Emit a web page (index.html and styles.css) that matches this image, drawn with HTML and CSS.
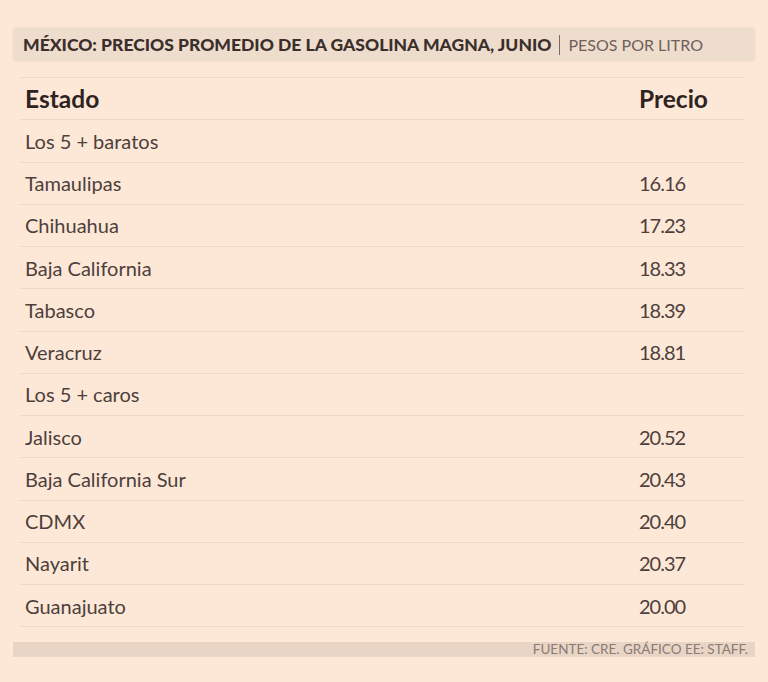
FILE: index.html
```html
<!DOCTYPE html>
<html lang="es">
<head>
<meta charset="utf-8">
<link rel="stylesheet" href="styles.css">
</head>
<body>
<div class="page">
  <div class="titlebar">
    <span class="title">MÉXICO: PRECIOS PROMEDIO DE LA GASOLINA MAGNA, JUNIO</span><span class="sep"></span><span class="unit">PESOS POR LITRO</span>
  </div>
  <div class="table">
    <div class="row head"><span class="c1">Estado</span><span class="c2">Precio</span></div>
    <div class="row"><span class="c1">Los 5 + baratos</span><span class="c2"></span></div>
    <div class="row"><span class="c1">Tamaulipas</span><span class="c2 num">16.16</span></div>
    <div class="row"><span class="c1">Chihuahua</span><span class="c2 num">17.23</span></div>
    <div class="row"><span class="c1">Baja California</span><span class="c2 num">18.33</span></div>
    <div class="row"><span class="c1">Tabasco</span><span class="c2 num">18.39</span></div>
    <div class="row"><span class="c1">Veracruz</span><span class="c2 num">18.81</span></div>
    <div class="row"><span class="c1">Los 5 + caros</span><span class="c2"></span></div>
    <div class="row"><span class="c1">Jalisco</span><span class="c2 num">20.52</span></div>
    <div class="row"><span class="c1">Baja California Sur</span><span class="c2 num">20.43</span></div>
    <div class="row"><span class="c1">CDMX</span><span class="c2 num">20.40</span></div>
    <div class="row"><span class="c1">Nayarit</span><span class="c2 num">20.37</span></div>
    <div class="row"><span class="c1">Guanajuato</span><span class="c2 num">20.00</span></div>
  </div>
  <div class="footer">FUENTE: CRE. GRÁFICO EE: STAFF.</div>
</div>
</body>
</html>
```
FILE: styles.css
```css
html, body {
  margin: 0;
  padding: 0;
  background: #fde8d8;
}
.page {
  width: 742px;
  padding: 28px 13px 0 13px;
  font-family: Lato, "Open Sans", sans-serif;
}
.titlebar {
  height: 33px;
  background: #eedccd;
  border-radius: 4px;
  display: flex;
  align-items: center;
  padding-left: 10px;
  box-shadow: 0 0 2px rgba(200, 170, 150, 0.4);
}
.title {
  font-weight: 900;
  font-size: 17.5px;
  color: #3b2f2c;
}
.sep {
  width: 1px;
  height: 20px;
  background: #7a6a64;
  margin: 0 8px 0 8px;
}
.unit {
  font-size: 16px;
  color: #6e605b;
}
.table {
  margin: 16px 10px 0 7px;
  border-top: 1px solid #f0d7c6;
}
.row {
  display: flex;
  align-items: center;
  height: 41.25px;
  border-bottom: 1px solid #f0d7c6;
  font-size: 20px;
  color: #4d403b;
}
.row .c1 {
  flex: 1;
  padding-left: 5px;
}
.row .c2 {
  width: 106px;
}
.row .num {
  letter-spacing: -1px;
}
.row.head {
  font-weight: 700;
  font-size: 24.5px;
  color: #2e2320;
}
.footer {
  margin-top: 15px;
  height: 15px;
  background: #e8d5c6;
  text-align: right;
  font-size: 13.5px;
  line-height: 15px;
  color: #8a7b74;
  padding-right: 7px;
}
```
